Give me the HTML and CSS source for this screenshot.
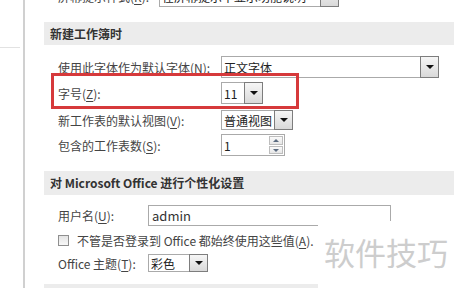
FILE: index.html
```html
<!DOCTYPE html>
<html lang="zh-CN">
<head>
  <meta charset="UTF-8">
  <meta name="viewport" content="width=device-width, initial-scale=1.0">
  <title>Excel 选项</title>
  <link rel="stylesheet" href="styles.css">
</head>
<body>
  <div class="window">
    <div class="nav">
      <div class="nav-item"></div>
    </div>

    <div class="options">
      <div class="row row-cut">
        <span class="label">屏幕提示样式(<u>R</u>):</span>
        <div class="combo combo-tip">
          <span class="value">在屏幕提示中显示功能说明</span>
          <span class="drop"></span>
        </div>
      </div>

      <div class="group-title">新建工作簿时</div>
      <div class="fields fields-new">
        <div class="row row-font">
          <span class="label">使用此字体作为默认字体(<u>N</u>):</span>
          <div class="combo combo-font">
            <span class="value">正文字体</span>
            <span class="drop"></span>
          </div>
        </div>
        <div class="row row-size">
          <span class="label">字号(<u>Z</u>):</span>
          <div class="combo combo-size">
            <span class="value">11</span>
            <span class="drop"></span>
          </div>
        </div>
        <div class="row row-view">
          <span class="label">新工作表的默认视图(<u>V</u>):</span>
          <div class="combo combo-view">
            <span class="value">普通视图</span>
            <span class="drop"></span>
          </div>
        </div>
        <div class="row row-sheets">
          <span class="label">包含的工作表数(<u>S</u>):</span>
          <div class="spin">
            <span class="value">1</span>
            <span class="spin-buttons">
              <span class="spin-up"></span>
              <span class="spin-down"></span>
            </span>
          </div>
        </div>
      </div>

      <div class="group-title group-office">对 Microsoft Office 进行个性化设置</div>
      <div class="fields fields-user">
        <div class="row row-user">
          <span class="label">用户名(<u>U</u>):</span>
          <div class="textbox">admin</div>
        </div>
        <div class="row row-check">
          <span class="checkbox"></span>
          <span class="check-label">不管是否登录到 Office 都始终使用这些值(<u>A</u>).</span>
        </div>
        <div class="row row-theme">
          <span class="label">Office 主题(<u>T</u>):</span>
          <div class="combo combo-theme">
            <span class="value">彩色</span>
            <span class="drop"></span>
          </div>
        </div>
      </div>

      <div class="group-title group-next"></div>
    </div>

    <!-- annotation and watermark lie over the dialog -->
    <div class="highlight"></div>
    <div class="watermark">软件技巧</div>
  </div>
</body>
</html>
```

FILE: styles.css
```css
body {
  margin: 0;
  background-color: #fff;
  font-family: "Noto Sans CJK SC", "Noto Sans", sans-serif;
  font-size: 12px;
  color: #444;
}

.window {
  position: relative;
  display: flex;
  width: 454px;
  height: 288px;
  overflow: hidden;
  background-color: #fff;
}

/* left category list */
.nav {
  flex: none;
  width: 23px;
  border-right: 2px solid #d0d0d0;
}

.nav-item {
  width: 20px;
  height: 47px;
  border-bottom: 1px solid #e2e2e2;
}

.options {
  flex: 1;
  margin-left: 19px;
  margin-top: -15px;
}

.row {
  display: flex;
  align-items: center;
}

.label {
  flex: none;
  white-space: nowrap;
}

u {
  text-decoration-thickness: 1px;
  text-underline-offset: 2px;
}

.row-cut {
  height: 22px;
  padding-left: 14px;
}

.row-cut .label {
  width: 101px;
}

/* section headers */
.group-title {
  height: 23px;
  line-height: 23px;
  margin-top: 15px;
  padding-left: 6px;
  background-color: #ececec;
  font-weight: bold;
  color: #333;
  white-space: nowrap;
}

.group-office {
  height: 24px;
  line-height: 24px;
}

.group-next {
  margin-top: 12px;
}

.fields {
  padding-left: 14px;
}

.fields-new {
  padding-top: 11px;
}

.fields-new .label {
  width: 163px;
}

.row-font,
.row-size,
.row-sheets {
  height: 22px;
}

.row-size {
  margin-top: 4px;
}

.row-view {
  height: 20px;
  margin-top: 6px;
}

.row-sheets {
  margin-top: 4px;
}

/* drop-down boxes */
.combo,
.spin,
.textbox {
  display: flex;
  align-items: center;
  box-sizing: border-box;
  height: 100%;
  border: 1px solid #aaa;
  background-color: #fff;
  color: #222;
}

.value {
  flex: 1;
  padding-left: 2px;
  white-space: nowrap;
  overflow: hidden;
}

.drop {
  position: relative;
  flex: none;
  box-sizing: border-box;
  width: 19px;
  height: calc(100% + 2px);
  margin: -1px -1px -1px 0;
  border: 1px solid #7d7d7d;
  background: linear-gradient(#f6f6f6, #d9d9d9);
}

.drop::after {
  content: "";
  position: absolute;
  left: 5px;
  top: 50%;
  margin-top: -2px;
  border-left: 4px solid transparent;
  border-right: 4px solid transparent;
  border-top: 4px solid #111;
}

.combo-tip {
  width: 180px;
}

.combo-font {
  width: 218px;
}

.combo-size {
  width: 42px;
}

.combo-view {
  width: 72px;
}

.combo-theme {
  width: 60px;
}

/* number spinner */
.spin {
  width: 64px;
}

.spin-buttons {
  display: flex;
  flex-direction: column;
  gap: 1px;
  width: 15px;
  height: 100%;
  padding: 1px 1px 1px 0;
  box-sizing: border-box;
}

.spin-up,
.spin-down {
  position: relative;
  flex: 1;
  border: 1px solid #bdbdbd;
  background: linear-gradient(#fafafa, #e6e6e6);
}

.spin-up::after,
.spin-down::after {
  content: "";
  position: absolute;
  left: 3px;
  top: 2px;
  border-left: 3px solid transparent;
  border-right: 3px solid transparent;
}

.spin-up::after {
  border-bottom: 3px solid #5b6b80;
}

.spin-down::after {
  border-top: 3px solid #5b6b80;
}

/* personalisation block */
.fields-user {
  padding-top: 10px;
}

.fields-user .label {
  width: 90px;
}

.row-user {
  height: 21px;
}

.textbox {
  width: 243px;
  padding-left: 3px;
  font-size: 13px;
  color: #333;
}

.row-check {
  height: 20px;
  margin-top: 4px;
}

.checkbox {
  flex: none;
  box-sizing: border-box;
  width: 11px;
  height: 11px;
  margin-right: 8px;
  border: 1px solid #8f8f8f;
  background: linear-gradient(#e4e4e4, #f8f8f8);
}

.check-label {
  white-space: nowrap;
}

.row-theme {
  height: 18px;
  margin-top: 4px;
}

/* red annotation frame */
.highlight {
  position: absolute;
  left: 51px;
  top: 73px;
  width: 248px;
  height: 36px;
  box-sizing: border-box;
  border: 3px solid #d6393b;
}

.watermark {
  position: absolute;
  left: 318px;
  top: 221px;
  right: 0;
  bottom: 0;
  padding: 15px 0 0 6px;
  background-color: #fff;
  font-size: 31px;
  line-height: 31px;
  color: #cdcdcd;
  letter-spacing: 0;
  white-space: nowrap;
}
```
